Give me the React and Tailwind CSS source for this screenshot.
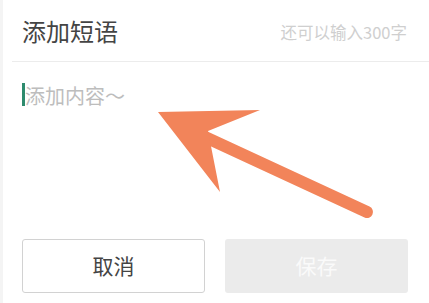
import React from 'react';

export default function App() {
  return (
    <div
      className="relative w-[429px] h-[303px] bg-white overflow-hidden"
      style={{ fontFamily: '"Noto Sans CJK SC", "Noto Sans", sans-serif' }}
    >
      <div className="h-full border-l-[3px] border-[#f4f4f4] flex flex-col">
        {/* Header */}
        <div className="h-[61px] flex items-center justify-between pl-[19px] pr-[22px]">
          <span className="text-[24px] leading-none text-[#444]">添加短语</span>
          <span className="text-[16.5px] leading-none text-[#cfcfcf] mt-[4px]">还可以输入300字</span>
        </div>
        <div className="ml-[9px] h-px bg-[#ececec]" />

        {/* Input area */}
        <div className="flex-1 pl-[19px] pt-[21px]">
          <div className="flex items-center h-[23px]">
            <div className="w-[3px] h-[23px] bg-[#2e8b6e]" />
            <span className="text-[20px] leading-none text-[#bdbdbd] mt-[3px]">添加内容～</span>
          </div>
        </div>

        {/* Buttons */}
        <div className="flex gap-[20px] pl-[19px] pr-[21px] pb-[10px]">
          <button className="w-[183px] h-[54px] border border-[#d2d2d2] rounded-[3px] bg-white text-[21px] text-[#444]">
            取消
          </button>
          <button className="w-[183px] h-[54px] rounded-[3px] bg-[#ebebeb] text-[21px] text-[#fafafa]">
            保存
          </button>
        </div>
      </div>

      {/* Annotation arrow */}
      <svg className="absolute left-0 top-0" width="429" height="303" viewBox="0 0 429 303">
        <line x1="205" y1="137" x2="367" y2="212" stroke="#f2845a" strokeWidth="12" strokeLinecap="round" />
        <polygon points="158,112 260,110 208,131 220,192" fill="#f2845a" />
      </svg>
    </div>
  );
}
